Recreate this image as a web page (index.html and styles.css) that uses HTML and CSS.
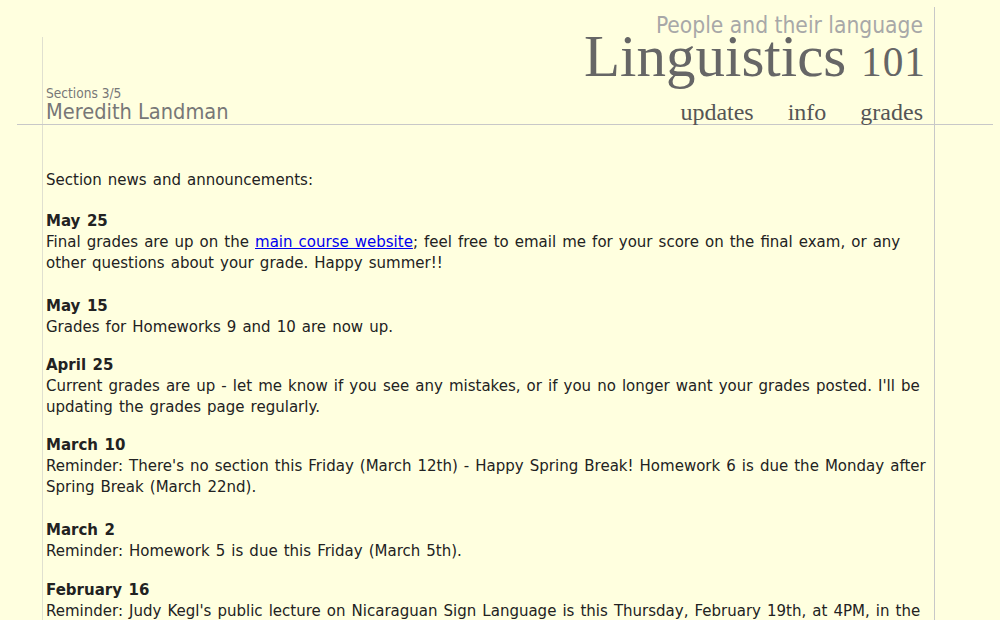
FILE: index.html
```html
<!DOCTYPE html>
<html>
<head>
<meta charset="utf-8">
<title>Linguistics 101 - Sections 3/5</title>
<link rel="stylesheet" href="styles.css">
</head>
<body>
<div class="header">
  <div class="header-col">
    <div class="identity">
      <div class="sections">Sections 3/5</div>
      <div class="name">Meredith Landman</div>
    </div>
    <div class="titles">
      <div class="tagline">People and their language</div>
      <div class="course">Linguistics <span class="num">101</span></div>
      <div class="nav">
        <a class="nav-link" href="#">updates</a>
        <a class="nav-link" href="#">info</a>
        <a class="nav-link" href="#">grades</a>
      </div>
    </div>
  </div>
</div>
<div class="content">
  <div class="intro">Section news and announcements:</div>

  <div class="entry gap-m">
    <div class="date">May 25</div>
    <div class="text">Final grades are up on the <a href="#">main course website</a>; feel free to email me for your score on the final exam, or any other questions about your grade. Happy summer!!</div>
  </div>

  <div class="entry gap-l">
    <div class="date">May 15</div>
    <div class="text">Grades for Homeworks 9 and 10 are now up.</div>
  </div>

  <div class="entry gap-s">
    <div class="date">April 25</div>
    <div class="text">Current grades are up - let me know if you see any mistakes, or if you no longer want your grades posted. I'll be updating the grades page regularly.</div>
  </div>

  <div class="entry gap-s">
    <div class="date">March 10</div>
    <div class="text">Reminder: There's no section this Friday (March 12th) - Happy Spring Break! Homework 6 is due the Monday after Spring Break (March 22nd).</div>
  </div>

  <div class="entry gap-l">
    <div class="date">March 2</div>
    <div class="text">Reminder: Homework 5 is due this Friday (March 5th).</div>
  </div>

  <div class="entry gap-t">
    <div class="date">February 16</div>
    <div class="text">Reminder: Judy Kegl's public lecture on Nicaraguan Sign Language is this Thursday, February 19th, at 4PM, in the Science Center, room 183. Attendance is encouraged.</div>
  </div>
</div>
</body>
</html>
```

FILE: styles.css
```css
html, body {
  margin: 0;
  padding: 0;
  background: #ffffdf;
}

body {
  font-family: "DejaVu Sans", Verdana, sans-serif;
  font-size: 15px;
  word-spacing: 1.3px;
  line-height: 21px;
  color: #222;
}

.header {
  margin-left: 17px;
  width: 976px;
  border-bottom: 1px solid #c8c8c8;
  padding-top: 7px;
}

.header-col {
  margin-left: 25px;
  width: 892px;
  border-right: 1px solid #c8c8c8;
  display: flex;
  align-items: stretch;
}

.identity {
  margin-top: 30px;
  border-left: 1px solid #e0e0d0;
  padding-left: 3px;
  padding-bottom: 1px;
  display: flex;
  flex-direction: column;
  justify-content: flex-end;
  color: #777;
  font-family: "DejaVu Sans Condensed", "Noto Sans", sans-serif;
  word-spacing: 0;
}

.sections {
  font-size: 13.6px;
  line-height: 14px;
  margin-bottom: 1px;
}

.name {
  font-size: 21.6px;
  line-height: 22px;
}

.titles {
  flex: 1;
  text-align: right;
  padding-right: 11px;
  word-spacing: 0;
}

.tagline {
  font-family: "DejaVu Sans Condensed", "Noto Sans", sans-serif;
  font-size: 22.6px;
  line-height: 26px;
  margin-top: 5px;
  color: #a8a8a8;
}

.course {
  font-family: "Liberation Serif", "DejaVu Serif", serif;
  font-size: 59px;
  line-height: 40px;
  height: 40px;
  margin-top: -2px;
  margin-right: -3px;
  color: #666;
}

.num {
  font-size: 0.7em;
  line-height: 0;
  letter-spacing: 1px;
}

.nav {
  font-family: "Liberation Serif", "DejaVu Serif", serif;
  font-size: 24px;
  line-height: 24px;
  margin-top: 24px;
  display: flex;
  justify-content: flex-end;
  gap: 34px;
}

.nav-link {
  color: #555;
  text-decoration: none;
}

.content {
  margin-left: 42px;
  width: 888px;
  border-left: 1px solid #e0e0d0;
  border-right: 1px solid #c8c8c8;
  padding: 45px 0 40px 3px;
}

.entry.gap-s { margin-top: 17px; }
.entry.gap-m { margin-top: 20px; }
.entry.gap-l { margin-top: 22px; }
.entry.gap-t { margin-top: 18px; }

.date {
  font-weight: bold;
}

.text a {
  color: #0000ee;
}
```
